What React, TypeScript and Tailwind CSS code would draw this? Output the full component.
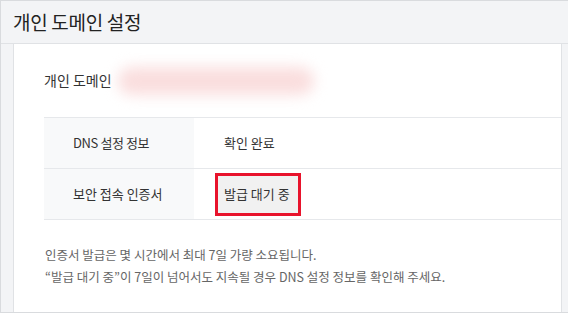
import React from "react";

export default function App() {
  const font = { fontFamily: '"Noto Sans CJK KR", "Noto Sans", sans-serif' };
  return (
    <div className="w-[568px] h-[314px] bg-white" style={font}>
      <div className="h-[313px] border-t border-b border-l border-[#d9dbde] bg-[#f3f4f6] flex flex-col">
        <div className="h-[43px] flex items-center pl-[12px] text-[19px] text-[#222] tracking-[-0.3px] border-b border-[#e0e2e5]">
          개인 도메인 설정
        </div>
        <div className="flex-1 ml-[12px] mr-[6px] bg-white border-l border-r border-[#e0e2e5] pl-[30px] flex flex-col">
          <div className="h-[73px] flex items-center">
            <span className="text-[14px] text-[#333] w-[70px]">개인 도메인</span>
            <div className="ml-[4px] w-[196px] h-[28px] rounded-full bg-[#fadede] blur-[7px]" />
          </div>
          <div className="border-t border-[#e6e8eb]">
            <div className="flex h-[51px] border-b border-[#e6e8eb]">
              <div className="w-[150px] bg-[#f8f9fa] flex items-center pl-[29px] text-[13px] text-[#333] tracking-[-0.4px]">DNS 설정 정보</div>
              <div className="flex items-center pl-[30px] text-[13px] text-[#333]">확인 완료</div>
            </div>
            <div className="flex h-[51px] border-b border-[#e6e8eb]">
              <div className="w-[150px] bg-[#f8f9fa] flex items-center pl-[29px] text-[13px] text-[#333]">보안 접속 인증서</div>
              <div className="flex items-center pl-[21px]">
                <div className="h-[43px] w-[86px] border-[3px] border-[#e8132c] bg-[#f1f1f1] flex items-center pl-[6px] text-[13px] text-[#333]">
                  발급 대기 중
                </div>
              </div>
            </div>
          </div>
          <div className="pt-[24px] text-[12.5px] leading-[22px] text-[#666] pl-[1px]">
            <div>인증서 발급은 몇 시간에서 최대 7일 가량 소요됩니다.</div>
            <div>“발급 대기 중”이 7일이 넘어서도 지속될 경우 DNS 설정 정보를 확인해 주세요.</div>
          </div>
        </div>
      </div>
    </div>
  );
}
